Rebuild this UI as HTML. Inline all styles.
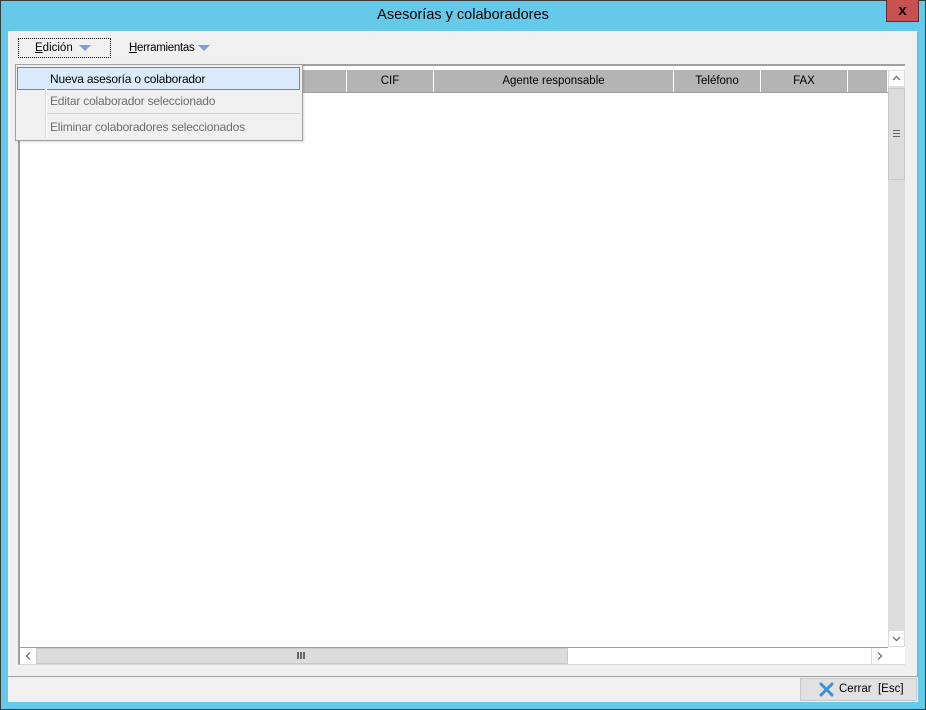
<!DOCTYPE html>
<html><head><meta charset="utf-8"><style>
*{margin:0;padding:0;box-sizing:border-box}
body{width:926px;height:710px;background:#65c9ea;position:relative;overflow:hidden;font-family:"Liberation Sans",sans-serif;font-size:11.5px;color:#000}
.a{position:absolute}
.frame{left:0;top:0;width:926px;height:710px;border:1px solid #3a3a3a}
.title{left:0;top:7px;width:926px;text-align:center;font-size:14.5px;color:#000}
.hdr{top:70px;height:23px;background:#b4b4b4;border-right:1px solid #fff;text-align:center;line-height:23px;font-size:11.5px}
</style></head><body>
<div class="a frame"></div>
<div class="a title">Asesorías y colaboradores</div>
<div class="a" style="left:886px;top:0px;width:33px;height:22px;background:#c75050;border:1px solid #5a3030;border-top:none"></div>
<div class="a" style="left:886px;top:1px;width:33px;text-align:center;font-weight:bold;font-size:15px;line-height:20px">x</div>
<div class="a" style="left:8px;top:31px;width:910px;height:671px;background:#f0f0f0"></div>
<div class="a" style="left:9px;top:31px;width:909px;height:646px;border:1px solid #fff;border-right-color:#a0a0a0;border-bottom:1px solid #a0a0a0"></div>
<div class="a" style="left:18px;top:38px;width:93px;height:20px;border:1px dotted #000;background:#f0f0f0"></div>
<div class="a" style="left:35px;top:42px"><u>E</u>dición</div>
<div class="a" style="left:79px;top:45px;width:0;height:0;border-left:6px solid transparent;border-right:6px solid transparent;border-top:6px solid #7c9ee0"></div>
<div class="a" style="left:129px;top:42px;letter-spacing:-0.3px"><u>H</u>erramientas</div>
<div class="a" style="left:198px;top:45px;width:0;height:0;border-left:6px solid transparent;border-right:6px solid transparent;border-top:6px solid #7c9ee0"></div>
<div class="a" style="left:18px;top:64px;width:887px;height:2px;background:#a0a0a0"></div>
<div class="a" style="left:18px;top:66px;width:887px;height:599px;background:#fff;border-left:2px solid #a0a0a0;border-bottom:1px solid #d8d8d8"></div>
<div class="a hdr" style="left:20px;width:327px"></div>
<div class="a hdr" style="left:347px;width:87px">CIF</div>
<div class="a hdr" style="left:434px;width:240px">Agente responsable</div>
<div class="a hdr" style="left:674px;width:87px">Teléfono</div>
<div class="a hdr" style="left:761px;width:87px">FAX</div>
<div class="a hdr" style="left:848px;width:40px"></div>
<div class="a" style="left:20px;top:92px;width:868px;height:1px;background:#a0a0a0"></div>
<div class="a" style="left:888px;top:70px;width:17px;height:577px;background:#dcdcdc"></div>
<div class="a" style="left:888px;top:70px;width:17px;height:17px;background:#fff;border:1px solid #dcdcdc"></div>
<svg class="a" style="left:888px;top:70px" width="17" height="17"><path d="M5 10 L8.5 6.5 L12 10" stroke="#606060" fill="none" stroke-width="1.2"/></svg>
<div class="a" style="left:888px;top:88px;width:17px;height:92px;background:#dcdcdc;border:1px solid #c8c8c8"></div>
<div class="a" style="left:893px;top:130px;width:7px;height:7px;border-top:1px solid #666;border-bottom:1px solid #666"><div style="margin-top:2px;height:1px;background:#666"></div></div>
<div class="a" style="left:888px;top:630px;width:17px;height:17px;background:#fff;border:1px solid #dcdcdc"></div>
<svg class="a" style="left:888px;top:630px" width="17" height="17"><path d="M5 7 L8.5 10.5 L12 7" stroke="#606060" fill="none" stroke-width="1.2"/></svg>
<div class="a" style="left:20px;top:647px;width:868px;height:17px;background:#fff;border-top:1px solid #a0a0a0"></div>
<svg class="a" style="left:20px;top:648px" width="16" height="16"><path d="M10 4.5 L6.5 8 L10 11.5" stroke="#606060" fill="none" stroke-width="1.2"/></svg>
<div class="a" style="left:36px;top:648px;width:532px;height:16px;background:#dcdcdc;border:1px solid #c8c8c8"></div>
<div class="a" style="left:297px;top:652px;width:8px;height:7px;border-left:2px solid #666;border-right:2px solid #666"><div style="margin-left:1px;width:2px;height:7px;background:#666"></div></div>
<div class="a" style="left:871px;top:648px;width:17px;height:16px;border-left:1px solid #dcdcdc"></div>
<svg class="a" style="left:871px;top:648px" width="16" height="16"><path d="M7 4.5 L10.5 8 L7 11.5" stroke="#606060" fill="none" stroke-width="1.2"/></svg>
<div class="a" style="left:8px;top:676px;width:910px;height:1px;background:#a0a0a0"></div>
<div class="a" style="left:800px;top:678px;width:117px;height:23px;background:#e1e1e1;border:1px solid #c8c8c8"></div>
<svg class="a" style="left:819px;top:682px" width="15" height="15"><path d="M2 2 L13 13 M13 2 L2 13" stroke="#3b8fd6" stroke-width="3" stroke-linecap="round"/></svg>
<div class="a" style="left:839px;top:683px">Cerrar&nbsp; [Esc]</div>
<div class="a" style="left:15px;top:64px;width:288px;height:77px;background:#f0f0f0;border:1px solid #a0a0a0;box-shadow:1px 1px 2px rgba(0,0,0,.15)"></div>
<div class="a" style="left:17px;top:67px;width:283px;height:23px;background:#dcebfc;border:1px solid #3399dd"></div>
<div class="a" style="left:45px;top:89px;width:1px;height:49px;background:#d8d8d8"></div>
<div class="a" style="left:46px;top:89px;width:1px;height:49px;background:#fff"></div>
<div class="a" style="left:50px;top:72px;font-size:12px;letter-spacing:-0.2px">Nueva asesoría o colaborador</div>
<div class="a" style="left:50px;top:94px;font-size:12px;letter-spacing:-0.2px;color:#6d6d6d">Editar colaborador seleccionado</div>
<div class="a" style="left:47px;top:113px;width:253px;height:1px;background:#d0d0d0"></div>
<div class="a" style="left:50px;top:120px;font-size:12px;letter-spacing:-0.2px;color:#6d6d6d">Eliminar colaboradores seleccionados</div>
</body></html>
